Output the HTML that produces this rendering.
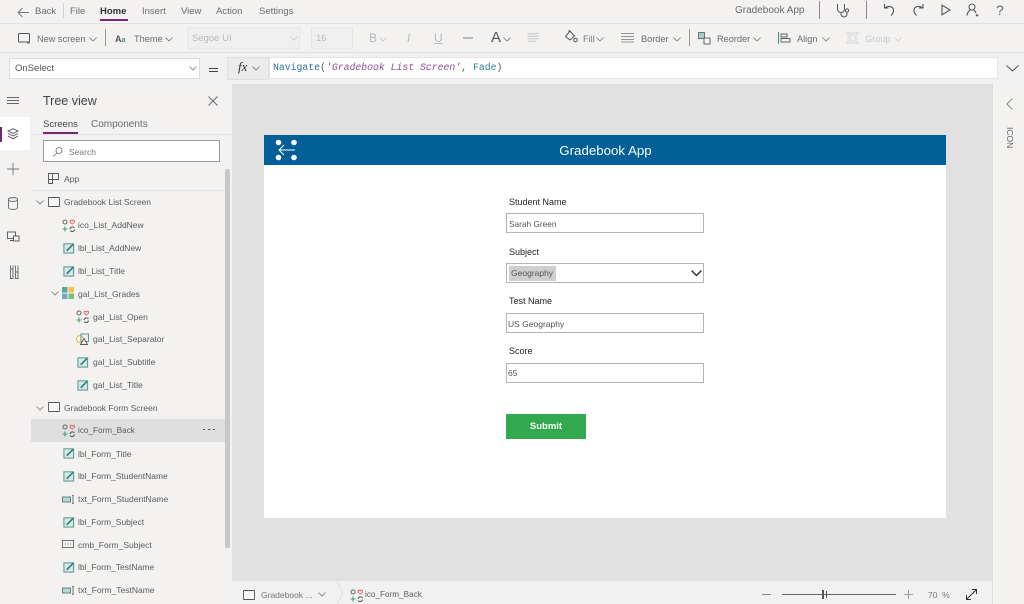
<!DOCTYPE html>
<html><head><meta charset="utf-8"><style>
html,body{margin:0;padding:0;width:1024px;height:604px;overflow:hidden;background:#f3f2f1}
body{position:relative;font-family:"Liberation Sans",sans-serif;font-size:9.5px;color:#5a5a5a;filter:blur(.3px)}
.a,.t{position:absolute}
.t{white-space:nowrap;line-height:12px}
.m{color:#6b6b6b;font-size:9.5px}
.d{color:#b9b9b9}
.n{font-size:9.5px;color:#5c5c5c}
.lb{font-size:9px;color:#222}
.in{position:absolute;left:506px;width:195px;height:18px;background:#fff;border:1.5px solid #b5b5b5}
svg{position:absolute;overflow:visible;fill:none}
</style></head><body>
<svg width="0" height="0" style="position:absolute"><defs>
<symbol id="chev" viewBox="0 0 8 5" overflow="visible"><path d="M.5 .5L4 4L7.5 .5" fill="none" stroke="#777" stroke-width=".8"/></symbol>
<symbol id="ico" viewBox="0 0 13 13"><circle cx="3" cy="3" r="2" fill="none" stroke="#666" stroke-width="1"/><path d="M8 2c1-1.500 1.800-.6 2.300 0c.5-.6 1.500-1.500 2.300 0c.3 1-1.500 2.500-2.300 3c-.8-.5-2.600-2-2.300-3z" fill="none" stroke="#e0685f" stroke-width="1"/><path d="M3 7.500v5M.5 10h5" stroke="#3aa76d" stroke-width="1.100"/><path d="M8 10a2.500 2.500 0 0 1 4.500-1M12.500 10.500a2.500 2.500 0 0 1-4.500 1" fill="none" stroke="#555" stroke-width="1"/></symbol>
<symbol id="lbl" viewBox="0 0 13 13"><rect x="1" y="2" width="10.500" height="10" fill="#d8e8e6" stroke="#4f9a94" stroke-width="1.100"/><path d="M4 9.500L11 2.500" stroke="#3c7f7a" stroke-width="1.800"/></symbol>
<symbol id="txt" viewBox="0 0 13 13"><rect x=".5" y="4" width="8" height="5" fill="#b9d6d3" stroke="#4d7f7c" stroke-width=".9"/><path d="M10 2.500c.8 0 1 .4 1 1v6c0 .6.200 1 1 1M10 10.500c.8 0 1-.4 1-1M12 2.500c-.8 0-1 .4-1 1" fill="none" stroke="#555" stroke-width=".8"/></symbol>
<symbol id="scr" viewBox="0 0 12 10"><rect x=".5" y=".5" width="11" height="9" rx=".5" fill="#f8f8f8" stroke="#555" stroke-width=".9"/></symbol>
</defs></svg>

<!-- ribbon -->
<div class="a" style="left:0;top:0;width:1024px;height:23px;background:#f3f2f1;border-bottom:1px solid #e2e2e2"></div>
<svg style="left:17px;top:7px" width="13" height="11"><path d="M12 5.500H1M5.500 1L1 5.500L5.500 10" stroke="#777" stroke-width=".9"/></svg>
<div class="t m" style="left:35px;top:6px">Back</div>
<div class="a" style="left:63px;top:3px;width:1px;height:15px;background:#d0d0d0"></div>
<div class="t m" style="left:70px;top:6px">File</div>
<div class="t" style="left:100px;top:6px;font-weight:700;color:#333;font-size:9.5px">Home</div>
<div class="a" style="left:100px;top:19px;width:28px;height:2px;background:#742774"></div>
<div class="t m" style="left:142px;top:6px">Insert</div>
<div class="t m" style="left:181px;top:6px">View</div>
<div class="t m" style="left:216px;top:6px">Action</div>
<div class="t m" style="left:259px;top:6px">Settings</div>
<div class="t m" style="left:735px;top:5px;font-size:10px">Gradebook App</div>
<div class="a" style="left:819px;top:1px;width:1px;height:18px;background:#888"></div>
<div class="a" style="left:866px;top:1px;width:1px;height:18px;background:#888"></div>
<svg style="left:836px;top:3px" width="15" height="15"><path d="M1.500 1v5a3.500 3.500 0 0 0 7 0V1M5 9.500v1.500a3 3 0 0 0 6 0V9" stroke="#555" stroke-width="1"/><circle cx="11" cy="7.500" r="1.600" stroke="#555"/></svg>
<svg style="left:883px;top:3px" width="13" height="14"><path d="M1.500 1v4h4M1.500 5C5 2.500 10 3 10.500 7c.2 2-1 4-2.500 5.500" stroke="#555" stroke-width="1.100"/></svg>
<svg style="left:912px;top:3px" width="13" height="14"><path d="M11 1v4H7M11 5C7.500 2.500 2.500 3 2 7c-.2 2 1 4 2.500 5.500" stroke="#555" stroke-width="1.100"/></svg>
<svg style="left:941px;top:4px" width="10" height="12"><path d="M1 1.200V10.800L9 6z" stroke="#555" stroke-width="1.100"/></svg>
<svg style="left:966px;top:3px" width="14" height="14"><circle cx="6" cy="4" r="3" stroke="#555" stroke-width="1.100"/><path d="M1 12.500c.5-3 2-5 3.500-5.500M7.500 7c1 .4 2 1.500 2.500 3M11 11v2.500M9.800 12.300h2.500" stroke="#555" stroke-width="1.100"/></svg>
<div class="t" style="left:996px;top:3px;font-size:14px;line-height:15px;color:#666">?</div>

<!-- toolbar -->
<div class="a" style="left:0;top:24px;width:1024px;height:28px;background:#f3f2f1;border-bottom:1px solid #dedede"></div>
<svg style="left:18px;top:33px" width="13" height="11"><rect x=".5" y=".5" width="11" height="8.500" rx="1" stroke="#555"/><path d="M9 10h3" stroke="#555" stroke-width=".8"/></svg>
<div class="t m" style="left:37px;top:33px;font-size:9.2px">New screen</div>
<svg style="left:89px;top:37px" width="8" height="5"><use href="#chev"/></svg>
<div class="a" style="left:105px;top:29px;width:1px;height:17px;background:#999"></div>
<div class="t" style="left:115px;top:33px;color:#555;font-size:9px;font-weight:700">A<span style="color:#3c8c86;font-size:7px">a</span></div>
<div class="t m" style="left:134px;top:33px;font-size:9.2px">Theme</div>
<svg style="left:165px;top:37px" width="8" height="5"><use href="#chev"/></svg>
<div class="a" style="left:187px;top:27px;width:113px;height:22px;background:#efefef;border:1px solid #e7e7e7;box-sizing:border-box"></div>
<div class="t d" style="left:192px;top:33px">Segoe UI</div>
<svg style="left:290px;top:36px" width="8" height="5" opacity=".3"><use href="#chev"/></svg>
<div class="a" style="left:311px;top:27px;width:42px;height:22px;background:#efefef;border:1px solid #e7e7e7;box-sizing:border-box"></div>
<div class="t d" style="left:316px;top:33px">16</div>
<div class="t d" style="left:369px;top:32px;font-size:12px">B</div>
<svg style="left:379px;top:37px" width="8" height="5" opacity=".4"><use href="#chev"/></svg>
<div class="t d" style="left:407px;top:32px;font-size:12px;font-style:italic">I</div>
<div class="t d" style="left:434px;top:32px;font-size:12px;text-decoration:underline">U</div>
<div class="a" style="left:463px;top:37px;width:10px;height:1.500px;background:#bbb"></div>
<div class="t" style="left:491px;top:30px;font-size:15px;line-height:15px;color:#555">A</div>
<svg style="left:503px;top:37px" width="8" height="5"><use href="#chev"/></svg>
<svg style="left:527px;top:33px" width="16" height="11"><path d="M.5 .8h11M.5 3.300h11M.5 5.800h11M.5 8.300h8" stroke="#c4c4c4"/></svg>
<svg style="left:564px;top:30px" width="14" height="14"><path d="M6 1L1.500 6.500L6 10L10.500 6z" stroke="#555"/><path d="M5 1.500V0" stroke="#555"/><circle cx="11.500" cy="10" r="1.800" stroke="#555"/></svg>
<div class="t" style="left:583px;top:33px;color:#777;font-size:9.2px">Fill</div>
<svg style="left:596px;top:37px" width="8" height="5"><use href="#chev"/></svg>
<svg style="left:621px;top:33px" width="13" height="10"><path d="M0 .5h13M0 3.500h13M0 6.500h13M0 9h13" stroke="#777" stroke-width=".8"/></svg>
<div class="t m" style="left:641px;top:33px;font-size:9.2px">Border</div>
<svg style="left:673px;top:37px" width="8" height="5"><use href="#chev"/></svg>
<div class="a" style="left:689px;top:29px;width:1px;height:17px;background:#999"></div>
<svg style="left:698px;top:32px" width="13" height="13"><rect x=".5" y=".5" width="6" height="6" fill="#9fd0cb" stroke="#555" stroke-width=".8"/><rect x="6" y="6" width="6" height="6" fill="#f7f7f7" stroke="#555" stroke-width=".9"/></svg>
<div class="t m" style="left:717px;top:33px;font-size:9.2px">Reorder</div>
<svg style="left:753px;top:37px" width="8" height="5"><use href="#chev"/></svg>
<svg style="left:778px;top:32px" width="13" height="13"><path d="M.5 0v12" stroke="#3c8c86"/><rect x="3" y="2" width="6" height="3" stroke="#555" stroke-width=".9"/><rect x="3" y="6.500" width="9" height="3.500" stroke="#555" stroke-width=".9"/></svg>
<div class="t m" style="left:797px;top:33px;font-size:9.2px">Align</div>
<svg style="left:822px;top:37px" width="8" height="5"><use href="#chev"/></svg>
<svg style="left:846px;top:32px" width="13" height="12" opacity=".35"><path d="M0 1h13M0 11h13M2 0v12M11 0v12" stroke="#999" stroke-width=".7"/><rect x="4" y="3" width="5" height="6" stroke="#888" stroke-width=".7"/></svg>
<div class="t" style="left:865px;top:33px;color:#c8c8c8;font-size:9.2px">Group</div>
<svg style="left:894px;top:37px" width="8" height="5" opacity=".3"><use href="#chev"/></svg>

<!-- formula -->
<div class="a" style="left:0;top:53px;width:1024px;height:31px;background:#f1f1f1"></div>
<div class="a" style="left:9px;top:58px;width:191px;height:21px;background:#fff;border:1px solid #dcdcdc;box-sizing:border-box"></div>
<div class="t" style="left:15px;top:63px;color:#555">OnSelect</div>
<svg style="left:189px;top:66px" width="8" height="5"><use href="#chev"/></svg>
<div class="a" style="left:209px;top:68px;width:9px;height:1px;background:#444"></div>
<div class="a" style="left:209px;top:71px;width:9px;height:1px;background:#444"></div>
<div class="a" style="left:227px;top:57px;width:42px;height:23px;background:#ebebeb;border:1px solid #dfdfdf;box-sizing:border-box"></div>
<div class="t" style="left:238px;top:61px;font-family:'Liberation Serif',serif;font-style:italic;font-size:13px;color:#333">fx</div>
<svg style="left:252px;top:66px" width="8" height="5"><use href="#chev"/></svg>
<div class="a" style="left:269px;top:57px;width:729px;height:22px;background:#fff;border:1px solid #e3e3e3;box-sizing:border-box"></div>
<div class="t" style="left:273px;top:62px;font-family:'Liberation Mono',monospace;font-size:9.8px;color:#555"><span style="color:#2f6f9f">Navigate</span>(<span style="color:#8a4f8a;font-style:italic">'Gradebook List Screen'</span>, <span style="color:#2f7f8f">Fade</span>)</div>
<svg style="left:1006px;top:65px" width="13" height="7"><path d="M.5 .5L6.500 6L12.500 .5" stroke="#555" stroke-width="1"/></svg>

<!-- left rail -->
<div class="a" style="left:0;top:84px;width:31px;height:520px;background:#f3f2f1;border-right:1px solid #e6e6e6"></div>
<svg style="left:7px;top:97px" width="12" height="8"><path d="M0 .5h12M0 3.500h12M0 6.500h12" stroke="#666"/></svg>
<div class="a" style="left:0;top:117px;width:30px;height:33px;background:#fff"></div>
<div class="a" style="left:0;top:127px;width:2px;height:15px;background:#742774"></div>
<svg style="left:7px;top:128px" width="12" height="12"><path d="M6 .7L11 3L6 5.500L1 3zM1 5.500L6 8L11 5.500M1 8L6 10.700L11 8" stroke="#555" stroke-width=".9"/></svg>
<svg style="left:7px;top:163px" width="12" height="12"><path d="M6 0v12M0 6h12" stroke="#777" stroke-width=".9"/></svg>
<svg style="left:8px;top:197px" width="10" height="13"><path d="M.5 2.500v8c0 2.500 9 2.500 9 0v-8c0-2.500-9-2.500-9 0c0 2.500 9 2.500 9 0" stroke="#666" stroke-width=".9"/></svg>
<svg style="left:7px;top:231px" width="13" height="13"><rect x=".5" y="1" width="8" height="6.500" stroke="#555" stroke-width=".9"/><rect x="6.500" y="5" width="5.500" height="5" fill="#f3f2f1" stroke="#555" stroke-width=".9"/><path d="M3 9.500h3" stroke="#555"/></svg>
<svg style="left:9px;top:265px" width="10" height="14"><path d="M1.500 .5v13h2.500v-13M6.500 .5v13h2.500v-13M1.500 4h2.500M6.500 7h2.500" stroke="#666" stroke-width=".9"/></svg>

<!-- tree -->
<div class="a" style="left:31px;top:84px;width:201px;height:520px;background:#f3f2f1"></div>
<div class="t" style="left:43px;top:94px;font-size:12.500px;line-height:15px;color:#444">Tree view</div>
<svg style="left:208px;top:96px" width="10" height="10"><path d="M.5 .5L9.500 9.500M9.500 .5L.5 9.500" stroke="#666" stroke-width=".9"/></svg>
<div class="t" style="left:43px;top:119px;color:#444;font-size:9.500px">Screens</div>
<div class="t m" style="left:91px;top:119px;font-size:10px">Components</div>
<div class="a" style="left:43px;top:132px;width:35px;height:2px;background:#742774"></div>
<div class="a" style="left:32px;top:134px;width:199px;height:1px;background:#e3e3e3"></div>
<div class="a" style="left:43px;top:140px;width:177px;height:22px;background:#fff;border:1px solid #999;box-sizing:border-box"></div>
<svg style="left:52px;top:147px" width="11" height="10"><circle cx="7" cy="3.500" r="3" stroke="#666" stroke-width=".8"/><path d="M5 6L1 9.500" stroke="#666" stroke-width=".8"/></svg>
<div class="t" style="left:69px;top:146px;font-size:8.500px;color:#777">Search</div>
<svg style="left:48px;top:173px" width="11" height="11"><path d="M.5 .5h10v6h-10zM.5 6.500v4M.5 10.500h4v-10" stroke="#555" stroke-width=".9"/></svg>
<div class="t n" style="left:64px;top:173px;font-size:8.500px">App</div>
<div class="a" style="left:32px;top:190px;width:199px;height:1px;background:#e3e3e3"></div>

<svg style="left:36px;top:200px" width="8" height="5"><use href="#chev"/></svg>
<svg style="left:48px;top:197px" width="12" height="10"><use href="#scr"/></svg>
<div class="t n" style="left:64px;top:196px;font-size:8.500px">Gradebook List Screen</div>
<svg style="left:62px;top:219px" width="13" height="13"><use href="#ico"/></svg>
<div class="t n" style="left:78px;top:219px;font-size:8.500px">ico_List_AddNew</div>
<svg style="left:63px;top:242px" width="12" height="12"><use href="#lbl"/></svg>
<div class="t n" style="left:78px;top:242px;font-size:8.500px">lbl_List_AddNew</div>
<svg style="left:63px;top:265px" width="12" height="12"><use href="#lbl"/></svg>
<div class="t n" style="left:78px;top:265px;font-size:8.500px">lbl_List_Title</div>
<svg style="left:51px;top:291px" width="8" height="5"><use href="#chev"/></svg>
<svg style="left:62px;top:287px" width="12" height="12"><rect width="5.500" height="5.500" fill="#5aa7a0"/><rect x="6.500" width="5.500" height="5.500" fill="#f2c14e"/><rect y="6.500" width="5.500" height="5.500" fill="#7aa4c9"/><rect x="6.500" y="6.500" width="5.500" height="5.500" fill="#7bbf73"/></svg>
<div class="t n" style="left:78px;top:288px;font-size:8.500px">gal_List_Grades</div>
<svg style="left:76px;top:310px" width="13" height="13"><use href="#ico"/></svg>
<div class="t n" style="left:93px;top:311px;font-size:8.500px">gal_List_Open</div>
<svg style="left:76px;top:333px" width="13" height="13"><circle cx="4" cy="6" r="3.500" stroke="#e8b65a"/><rect x="5" y="1" width="7.500" height="7.500" stroke="#4f9a94"/><path d="M4.500 11.500L8 5.500L11.500 11.500z" fill="#f3f2f1" stroke="#555" stroke-width=".9"/></svg>
<div class="t n" style="left:93px;top:333px;font-size:8.500px">gal_List_Separator</div>
<svg style="left:77px;top:356px" width="12" height="12"><use href="#lbl"/></svg>
<div class="t n" style="left:93px;top:356px;font-size:8.500px">gal_List_Subtitle</div>
<svg style="left:77px;top:379px" width="12" height="12"><use href="#lbl"/></svg>
<div class="t n" style="left:93px;top:379px;font-size:8.500px">gal_List_Title</div>
<svg style="left:36px;top:406px" width="8" height="5"><use href="#chev"/></svg>
<svg style="left:48px;top:402px" width="12" height="10"><use href="#scr"/></svg>
<div class="t n" style="left:64px;top:402px;font-size:8.500px">Gradebook Form Screen</div>
<div class="a" style="left:31px;top:419px;width:194px;height:23px;background:#dfdfdf"></div>
<svg style="left:62px;top:424px" width="13" height="13"><use href="#ico"/></svg>
<div class="t n" style="left:78px;top:425px;font-size:8.200px">ico_Form_Back</div>
<svg style="left:203px;top:428px" width="12" height="3"><path d="M0 1.500h2M5 1.500h2M10 1.500h2" stroke="#555"/></svg>
<svg style="left:63px;top:447px" width="12" height="12"><use href="#lbl"/></svg>
<div class="t n" style="left:78px;top:448px;font-size:8.500px">lbl_Form_Title</div>
<svg style="left:63px;top:470px" width="12" height="12"><use href="#lbl"/></svg>
<div class="t n" style="left:78px;top:470px;font-size:8.500px">lbl_Form_StudentName</div>
<svg style="left:62px;top:493px" width="13" height="13"><use href="#txt"/></svg>
<div class="t n" style="left:78px;top:493px;font-size:8.500px">txt_Form_StudentName</div>
<svg style="left:63px;top:516px" width="12" height="12"><use href="#lbl"/></svg>
<div class="t n" style="left:78px;top:516px;font-size:8.500px">lbl_Form_Subject</div>
<svg style="left:62px;top:540px" width="12" height="8"><rect x=".5" y=".5" width="11" height="7" stroke="#555" stroke-width=".8"/><path d="M3 4h1M5.500 4h1M8 4h1" stroke="#555" stroke-width=".8"/></svg>
<div class="t n" style="left:78px;top:539px;font-size:8.500px">cmb_Form_Subject</div>
<svg style="left:63px;top:561px" width="12" height="12"><use href="#lbl"/></svg>
<div class="t n" style="left:78px;top:561px;font-size:8.500px">lbl_Form_TestName</div>
<svg style="left:62px;top:584px" width="13" height="13"><use href="#txt"/></svg>
<div class="t n" style="left:78px;top:584px;font-size:8.500px">txt_Form_TestName</div>
<div class="a" style="left:225px;top:169px;width:5px;height:379px;background:#c8c8c8;border-radius:2px"></div>

<!-- canvas -->
<div class="a" style="left:232px;top:84px;width:760px;height:497px;background:#e1e1e1"></div>
<div class="a" style="left:264px;top:135px;width:682px;height:383px;background:#fff"></div>
<div class="a" style="left:264px;top:135px;width:682px;height:30px;background:#005f96"></div>
<div class="t" style="left:264px;top:143px;width:683px;text-align:center;color:#fff;font-size:13.3px;line-height:16px">Gradebook App</div>
<svg style="left:275px;top:139px" width="23" height="22"><circle cx="3.500" cy="3.500" r="2.800" fill="#fff"/><circle cx="19" cy="3.500" r="2.800" fill="#fff"/><circle cx="3.500" cy="18.500" r="2.800" fill="#fff"/><circle cx="19" cy="18.500" r="2.800" fill="#fff"/><path d="M20 11H4M9 6L4 11L9 16" stroke="#fff" stroke-width="1"/></svg>

<div class="t lb" style="left:509px;top:196px">Student Name</div>
<div class="in" style="top:213px;width:196px"></div>
<div class="t" style="left:509px;top:218px;font-size:8.300px;color:#555">Sarah Green</div>
<div class="t lb" style="left:509px;top:246px">Subject</div>
<div class="in" style="top:263px;width:196px"></div>
<div class="a" style="left:509px;top:266px;width:47px;height:15px;background:#cfcfcf"></div>
<div class="t" style="left:511px;top:267px;font-size:8.500px;color:#555">Geography</div>
<svg style="left:691px;top:270px" width="11" height="7"><path d="M.7 .7L5.500 5.500L10.300 .7" stroke="#333" stroke-width="1.500"/></svg>
<div class="t lb" style="left:509px;top:295px">Test Name</div>
<div class="in" style="top:313px;width:196px"></div>
<div class="t" style="left:508px;top:318px;font-size:8.500px;color:#555">US Geography</div>
<div class="t lb" style="left:509px;top:345px">Score</div>
<div class="in" style="top:363px;width:196px"></div>
<div class="t" style="left:508px;top:367px;font-size:8.500px;color:#555">65</div>
<div class="a" style="left:506px;top:414px;width:80px;height:25px;background:#32a84f;color:#fff;font-weight:700;font-size:9.500px;line-height:25px;text-align:center">Submit</div>

<!-- status -->
<div class="a" style="left:232px;top:581px;width:760px;height:23px;background:#f1f1f1"></div>
<svg style="left:243px;top:590px" width="12" height="10"><use href="#scr"/></svg>
<div class="t n" style="left:261px;top:589px;font-size:8.500px;color:#777">Gradebook ...</div>
<svg style="left:318px;top:592px" width="8" height="5"><use href="#chev"/></svg>
<svg style="left:337px;top:581px" width="6" height="23"><path d="M.5 0L5.500 11.500L.5 23" stroke="#e2e2e2"/></svg>
<svg style="left:350px;top:589px" width="13" height="13"><use href="#ico"/></svg>
<div class="t n" style="left:365px;top:589px;font-size:8.200px">ico_Form_Back</div>
<div class="a" style="left:762px;top:594px;width:9px;height:1px;background:#888"></div>
<div class="a" style="left:782px;top:594px;width:114px;height:1px;background:#666"></div>
<div class="a" style="left:822px;top:590px;width:1.500px;height:9px;background:#555"></div>
<div class="a" style="left:826px;top:591px;width:1px;height:7px;background:#555"></div>
<svg style="left:904px;top:590px" width="9" height="9"><path d="M4.500 0v9M0 4.500h9" stroke="#888" stroke-width=".8"/></svg>
<div class="t" style="left:928px;top:589px;font-size:8.500px;color:#777">70&nbsp; %</div>
<svg style="left:966px;top:589px" width="11" height="11"><path d="M.5 10.500L10.500 .5M6 .5h4.500V5M.5 6v4.500H5" stroke="#333" stroke-width="1"/></svg>

<!-- right panel -->
<div class="a" style="left:992px;top:84px;width:32px;height:520px;background:#f3f2f1;border-left:1px solid #dcdcdc;box-sizing:border-box"></div>
<svg style="left:1006px;top:98px" width="7" height="12"><path d="M6.500 .5L.8 6L6.500 11.500" stroke="#888" stroke-width=".9"/></svg>
<div class="t" style="left:1004px;top:127px;width:12px;height:24px;writing-mode:vertical-rl;font-size:8.500px;line-height:12px;color:#666">ICON</div>
</body></html>
